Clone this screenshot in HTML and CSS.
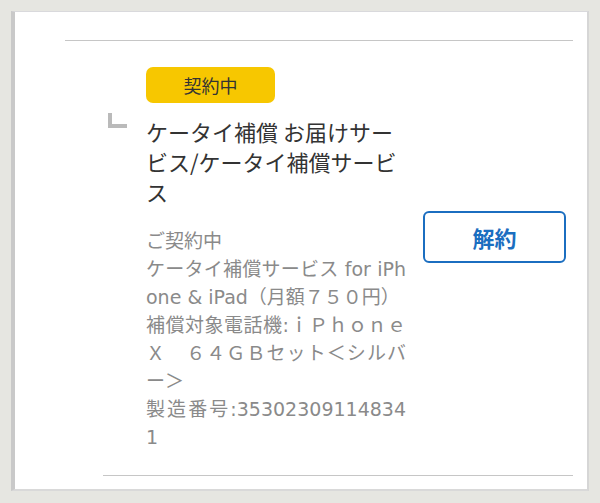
FILE: index.html
```html
<!DOCTYPE html>
<html lang="ja">
<head>
    <meta charset="UTF-8">
    <meta name="viewport" content="width=device-width, initial-scale=1.0">
    <title>ご契約中のサービス</title>
    <link rel="stylesheet" href="styles.css">
</head>
<body>
    <div class="card">
        <hr class="divider">

        <div class="contract-item">
            <span class="status-badge">契約中</span>

            <span class="sub-mark"></span>
            <h2 class="service-name">ケータイ補償 お届けサービス/ケータイ補償サービス</h2>

            <p class="service-detail">ご契約中<br>ケータイ補償サービス for iPhone &amp; iPad（月額７５０円）<br>補償対象電話機:ｉＰｈｏｎｅＸ　６４ＧＢセット＜シルバー＞<br>製造番号:353023091148341</p>

            <button class="cancel-button" type="button">解約</button>
        </div>
    </div>
</body>
</html>
```

FILE: styles.css
```css
body {
    margin: 0;
    padding: 11px 11px 0;
    background-color: #e6e6e1;
    font-family: "Noto Sans CJK JP", sans-serif;
}
.card {
    background-color: white;
    border-left: 4px solid #c9c9c9;
    border-top: 1px solid #d9d9dc;
    border-right: 2px solid #d6d6d6;
    border-bottom: 2px solid #d9d9d9;
    padding: 28px 0 13px;
}
.divider {
    margin: 0 14px 0 50px;
    border: none;
    height: 1px;
    background-color: #c6c6c6;
}
.contract-item {
    display: grid;
    grid-template-columns: 38px 260px 1fr;
    margin: 0 14px 0 88px;
    padding: 26px 0 24px 5px;
    border-bottom: 1px solid #c6c6c6;
}
.status-badge {
    grid-column: 2;
    justify-self: start;
    width: 129px;
    height: 36px;
    line-height: 36px;
    text-align: center;
    background-color: #f7c700;
    border-radius: 7px;
    font-size: 18px;
    color: #333;
}
.sub-mark {
    grid-column: 1;
    grid-row: 2;
    width: 15px;
    height: 11px;
    margin-top: 10px;
    border-left: 4px solid #bababa;
    border-bottom: 4px solid #bababa;
}
.service-name {
    grid-column: 2;
    grid-row: 2;
    margin: 13px 0 0;
    font-size: 22px;
    font-weight: normal;
    line-height: 30px;
    color: #333;
}
.service-detail {
    grid-column: 2;
    grid-row: 3;
    margin: 21px 0 0;
    font-family: "DejaVu Sans", "Noto Sans CJK JP", sans-serif;
    font-size: 19px;
    line-height: 28px;
    color: #8a8a8a;
    text-align: justify;
    word-break: break-all;
}
.cancel-button {
    grid-column: 3;
    grid-row: 3;
    justify-self: end;
    align-self: start;
    width: 143px;
    height: 52px;
    margin: 5px 7px 0 0;
    background-color: white;
    border: 2px solid #1b6ec0;
    border-radius: 6px;
    color: #1b6ec0;
    font-family: "Noto Sans CJK JP", sans-serif;
    font-size: 22px;
    font-weight: bold;
    cursor: pointer;
}
```
